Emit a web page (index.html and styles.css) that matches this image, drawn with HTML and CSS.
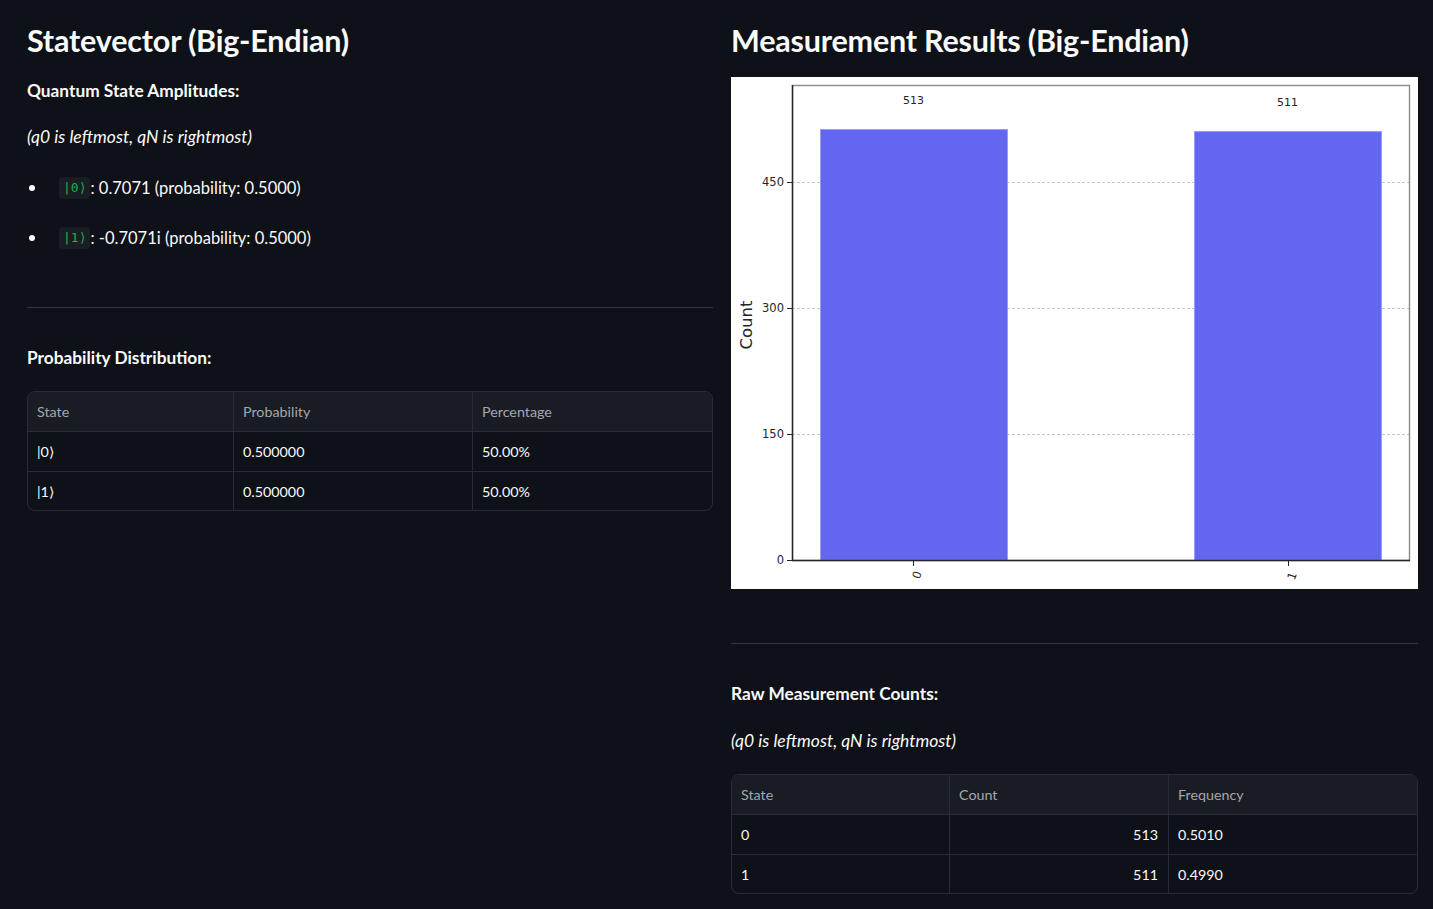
FILE: index.html
```html
<!DOCTYPE html>
<html lang="en">
<head>
<meta charset="utf-8">
<title>Quantum results</title>
<link rel="stylesheet" href="styles.css">
</head>
<body>
<main class="page">
  <section class="col">
    <h3 class="title">Statevector (Big-Endian)</h3>
    <p class="label label-first">Quantum State Amplitudes:</p>
    <p class="note">(q0 is leftmost, qN is rightmost)</p>
    <ul class="amps">
      <li><span class="dot"></span><code class="ket">|0⟩</code><span class="amp-text">: 0.7071 (probability: 0.5000)</span></li>
      <li><span class="dot"></span><code class="ket">|1⟩</code><span class="amp-text">: -0.7071i (probability: 0.5000)</span></li>
    </ul>
    <hr class="rule rule-left">
    <p class="label label-after-rule">Probability Distribution:</p>
    <div class="dt dt-prob">
      <div class="cell head">State</div>
      <div class="cell head">Probability</div>
      <div class="cell head">Percentage</div>
      <div class="cell">|0⟩</div>
      <div class="cell">0.500000</div>
      <div class="cell">50.00%</div>
      <div class="cell last">|1⟩</div>
      <div class="cell last">0.500000</div>
      <div class="cell last">50.00%</div>
    </div>
  </section>

  <section class="col">
    <h3 class="title">Measurement Results (Big-Endian)</h3>
    <div class="chart">
      <svg width="687" height="512" viewBox="0 0 687 512" xmlns="http://www.w3.org/2000/svg">
        <rect x="0" y="0" width="687" height="512" fill="#ffffff"/>
        <g stroke="#c8c8c8" stroke-width="1" stroke-dasharray="3 2">
          <line x1="61" y1="357.5" x2="679" y2="357.5"/>
          <line x1="61" y1="231.5" x2="679" y2="231.5"/>
          <line x1="61" y1="105.5" x2="679" y2="105.5"/>
        </g>
        <rect x="89.5" y="52.5" width="187" height="431" fill="#6366f1" stroke="#9a9cf6" stroke-width="1"/>
        <rect x="463.5" y="54.5" width="187" height="429" fill="#6366f1" stroke="#9a9cf6" stroke-width="1"/>
        <g font-family="DejaVu Sans, sans-serif" font-size="11" fill="#262626" text-anchor="middle">
          <text x="182.5" y="27">513</text>
          <text x="556.5" y="29">511</text>
        </g>
        <rect x="61.5" y="8.5" width="617" height="475" fill="none" stroke="#8a8a8a" stroke-width="1.4"/>
        <line x1="61.5" y1="8" x2="61.5" y2="484" stroke="#262626" stroke-width="1.4"/>
        <line x1="61" y1="483.5" x2="679" y2="483.5" stroke="#262626" stroke-width="1.4"/>
        <g stroke="#262626" stroke-width="1">
          <line x1="56" y1="483.5" x2="61" y2="483.5"/>
          <line x1="56" y1="357.5" x2="61" y2="357.5"/>
          <line x1="56" y1="231.5" x2="61" y2="231.5"/>
          <line x1="56" y1="105.5" x2="61" y2="105.5"/>
          <line x1="182.5" y1="484" x2="182.5" y2="489"/>
          <line x1="557.5" y1="484" x2="557.5" y2="489"/>
        </g>
        <g font-family="DejaVu Sans, sans-serif" font-size="11.5" fill="#262626" text-anchor="end">
          <text x="53" y="487">0</text>
          <text x="53" y="361">150</text>
          <text x="53" y="235">300</text>
          <text x="53" y="109">450</text>
        </g>
        <g font-family="DejaVu Sans, sans-serif" font-size="11.5" fill="#262626" text-anchor="middle">
          <text x="186" y="502" transform="rotate(-70 186 498)">0</text>
          <text x="561" y="503" transform="rotate(-70 561 499)">1</text>
        </g>
        <text x="21" y="248" font-family="DejaVu Sans, sans-serif" font-size="16.5" fill="#262626" text-anchor="middle" transform="rotate(-90 21 248)">Count</text>
      </svg>
    </div>
    <hr class="rule rule-right">
    <p class="label label-after-rule">Raw Measurement Counts:</p>
    <p class="note note-right">(q0 is leftmost, qN is rightmost)</p>
    <div class="dt dt-counts">
      <div class="cell head">State</div>
      <div class="cell head">Count</div>
      <div class="cell head">Frequency</div>
      <div class="cell">0</div>
      <div class="cell num">513</div>
      <div class="cell">0.5010</div>
      <div class="cell last">1</div>
      <div class="cell num last">511</div>
      <div class="cell last">0.4990</div>
    </div>
  </section>
</main>
</body>
</html>
```

FILE: styles.css
```css
* { box-sizing: border-box; }

html, body {
  margin: 0;
  padding: 0;
  background: #0e1117;
  color: #fafafa;
  font-family: Lato, "Noto Sans", sans-serif;
}

.page {
  display: grid;
  grid-template-columns: 686px 687px;
  column-gap: 18px;
  padding: 0 15px 0 27px;
  width: 1433px;
}

.col {
  display: flex;
  flex-direction: column;
  min-width: 0;
}

.title {
  margin: 21px 0 0;
  font-size: 30.5px;
  line-height: 38px;
  font-weight: 700;
  letter-spacing: -0.2px;
}

.label {
  margin: 0;
  font-size: 17.3px;
  line-height: 26px;
  font-weight: 700;
}

.label-first { margin-top: 19px; }
.label-after-rule { margin-top: 37px; }

.note {
  margin: 20px 0 0;
  font-size: 17.5px;
  line-height: 26px;
  font-style: italic;
}

.note-right { margin-top: 21px; }

.amps {
  list-style: none;
  margin: 25px 0 0;
  padding: 0;
  display: flex;
  flex-direction: column;
  gap: 24px;
}

.amps li {
  display: flex;
  align-items: center;
  height: 26px;
  font-size: 16.5px;
}

.dot {
  width: 6px;
  height: 6px;
  border-radius: 50%;
  background: #fafafa;
  margin: 0 24px 0 2px;
}

.ket {
  font-family: "DejaVu Sans Mono", monospace;
  font-size: 13px;
  color: #22ad4c;
  background: #1b1d24;
  border-radius: 4px;
  padding: 0 4px;
  height: 22px;
  line-height: 22px;
  margin-right: 0;
}

.rule {
  border: 0;
  height: 1px;
  background: #33353c;
  margin: 0;
  width: 100%;
}

.rule-left { margin-top: 56px; }
.rule-right { margin-top: 54px; }

.chart {
  margin-top: 18px;
  height: 512px;
  line-height: 0;
}

.dt {
  margin-top: 20px;
  display: grid;
  border: 1px solid #2a2c33;
  border-radius: 8px;
  overflow: hidden;
  font-size: 14.3px;
}

.dt-prob { grid-template-columns: 205px 239px 1fr; }
.dt-counts { grid-template-columns: 217px 219px 1fr; }

.cell {
  height: 40px;
  display: flex;
  align-items: center;
  padding: 0 9px;
  border-bottom: 1px solid #2a2c33;
  border-left: 1px solid #2a2c33;
  white-space: nowrap;
}

.cell:nth-child(3n+1) { border-left: 0; }

.cell.head {
  background: #1a1c23;
  color: #a3a6ad;
}

.cell.last {
  border-bottom: 0;
  height: 38px;
}

.cell.num { justify-content: flex-end; padding-right: 10px; }
```
